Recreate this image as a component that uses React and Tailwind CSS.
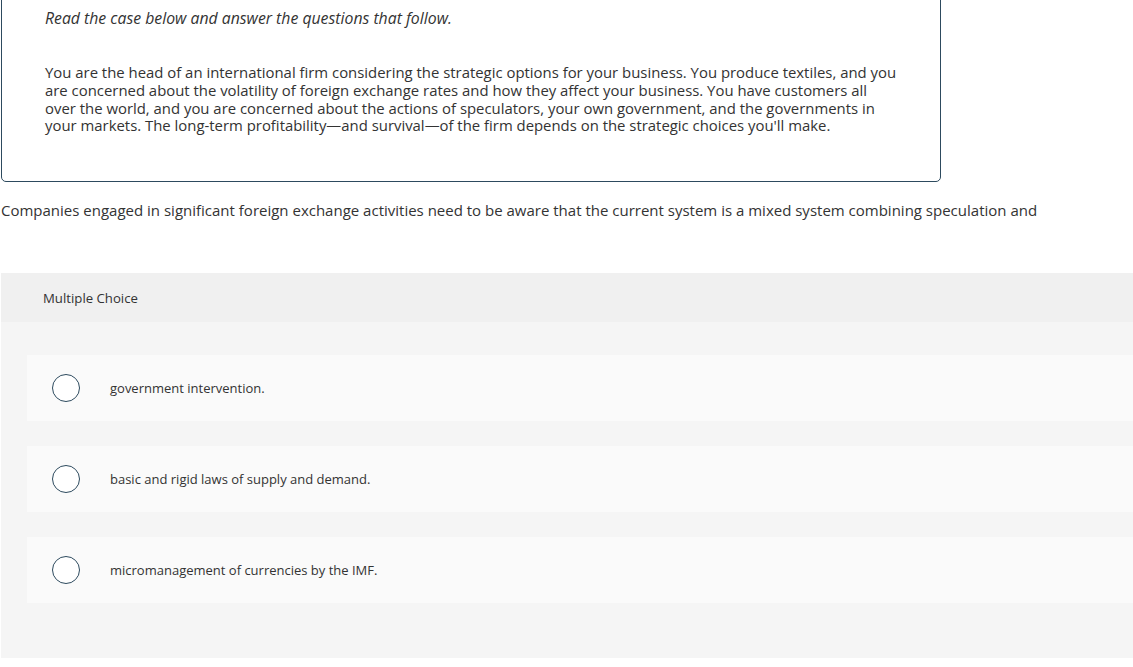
const options = [
  'government intervention.',
  'basic and rigid laws of supply and demand.',
  'micromanagement of currencies by the IMF.',
];

function Radio() {
  return <span className="block w-[28px] h-[28px] rounded-full border-[1.5px] border-[#2d4a5e] bg-white shrink-0" />;
}

export default function App() {
  return (
    <div className="bg-white h-[667px] overflow-hidden text-[#333] font-['Open_Sans',sans-serif]">
      {/* case box */}
      <div className="mt-[-20px] ml-px w-[940px] h-[202px] border border-[#2d4a5e] rounded-b-[5px] pl-[43px] pt-[28px]">
        <p className="italic text-[15.8px] leading-[18px]">Read the case below and answer the questions that follow.</p>
        <p className="mt-[37px] text-[14.9px] leading-[17.8px]">
          You are the head of an international firm considering the strategic options for your business. You produce textiles, and you<br />
          are concerned about the volatility of foreign exchange rates and how they affect your business. You have customers all<br />
          over the world, and you are concerned about the actions of speculators, your own government, and the governments in<br />
          your markets. The long-term profitability—and survival—of the firm depends on the strategic choices you'll make.
        </p>
      </div>

      <p className="mt-[19px] ml-[1px] text-[15px] leading-[18px] whitespace-nowrap">
        Companies engaged in significant foreign exchange activities need to be aware that the current system is a mixed system combining speculation and
      </p>

      <div className="mt-[54px] ml-px bg-[#f5f5f5] h-[385px]">
        <div className="bg-[#f0f0f0] h-[49px] flex items-center pl-[42px] pt-[2px] text-[13.2px]">Multiple Choice</div>
        <div className="pt-[33px] pl-[26px] flex flex-col gap-[25px]">
          {options.map((o) => (
            <div key={o} className="bg-[#fafafa] h-[66px] flex items-center pl-[25px]">
              <Radio />
              <span className="ml-[30px] pt-px text-[13px]">{o}</span>
            </div>
          ))}
        </div>
      </div>
    </div>
  );
}
